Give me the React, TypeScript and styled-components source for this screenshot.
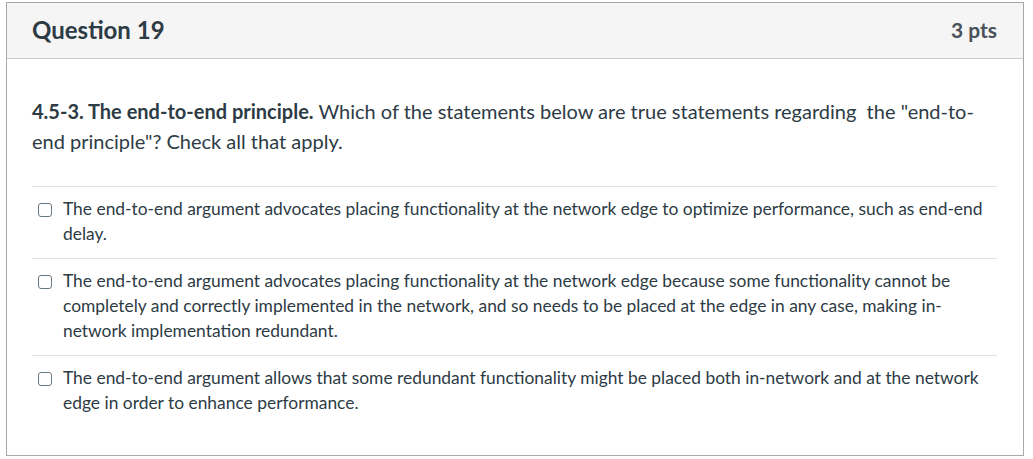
import * as React from 'react'
import styled, { createGlobalStyle } from 'styled-components'

const GlobalStyle = createGlobalStyle`
    html, body {
        margin: 0;
        padding: 0;
        background: #ffffff;
    }
    body {
        font-family: Lato, "Open Sans", "Liberation Sans", sans-serif;
        color: #2d3b45;
    }
`

const Page = styled.div`
    padding: 2px 9px 4px 6px;
`

const QuestionCard = styled.div`
    border: 1px solid #a5a9ac;
    background: #ffffff;
`

const Header = styled.div`
    display: flex;
    justify-content: space-between;
    align-items: center;
    height: 56px;
    padding: 0 26px 2px 25px;
    box-sizing: border-box;
    background: #f5f5f5;
    border-bottom: 1px solid #c7cdd1;
`

const Title = styled.div`
    font-size: 24px;
    font-weight: 700;
    color: #2d3b45;
`

const Points = styled.div`
    font-size: 21px;
    font-weight: 700;
    color: #4a5259;
`

const Body = styled.div`
    padding: 37px 26px 28px 25px;
`

const Prompt = styled.div`
    font-size: 20px;
    line-height: 30px;
    color: #2d3b45;
    margin-bottom: 30px;

    strong {
        font-weight: 700;
    }
`

const AnswerList = styled.div`
    display: flex;
    flex-direction: column;
`

const AnswerRow = styled.label`
    display: flex;
    align-items: flex-start;
    gap: 11px;
    padding: 9px 0 12px 6px;
    border-top: 1px solid #dfe2e4;
    font-size: 17.4px;
    line-height: 25px;
    color: #2d3b45;
    cursor: pointer;
`

const Box = styled.span`
    flex: none;
    width: 12px;
    height: 12px;
    margin-top: 7px;
    border: 1px solid #6b7780;
    border-radius: 3px;
    background: #ffffff;
`

const answers = [
    'The end-to-end argument advocates placing functionality at the network edge to optimize performance, such as end-end delay.',
    'The end-to-end argument advocates placing functionality at the network edge because some functionality cannot be completely and correctly implemented in the network, and so needs to be placed at the edge in any case, making in-network implementation redundant.',
    'The end-to-end argument allows that some redundant functionality might be placed both in-network and at the network edge in order to enhance performance.',
]

export default function App() {
    return (
        <Page>
            <GlobalStyle />
            <QuestionCard>
                <Header>
                    <Title>Question 19</Title>
                    <Points>3 pts</Points>
                </Header>
                <Body>
                    <Prompt>
                        <strong>4.5-3. The end-to-end principle.</strong> Which of the statements below are true statements regarding&nbsp; the "end-to-end principle"? Check all that apply.
                    </Prompt>
                    <AnswerList>
                        {answers.map((text, i) => (
                            <AnswerRow key={i}>
                                <Box />
                                <span>{text}</span>
                            </AnswerRow>
                        ))}
                    </AnswerList>
                </Body>
            </QuestionCard>
        </Page>
    )
}
